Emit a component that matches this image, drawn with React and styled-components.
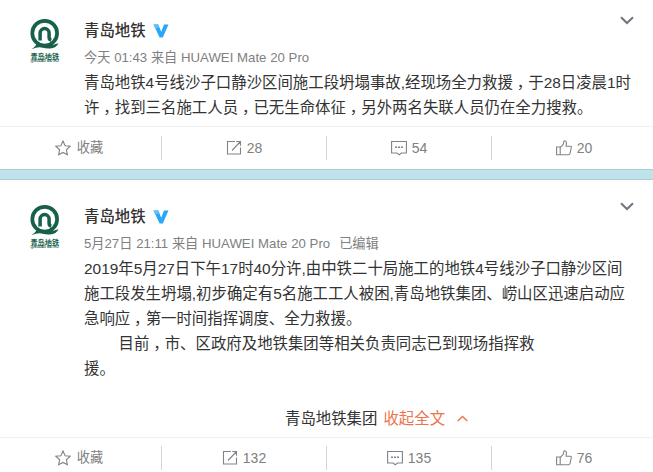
import React from "react";
import styled, { createGlobalStyle } from "styled-components";

const GlobalStyle = createGlobalStyle`
  body {
    margin: 0;
    background: #bee3ea;
    font-family: "Liberation Sans", "Noto Sans CJK SC", sans-serif;
    overflow: hidden;
  }
`;

const Feed = styled.main`
  width: 653px;
  height: 472px;
  overflow: hidden;
  display: flex;
  flex-direction: column;
  gap: 10px;
`;

const Card = styled.article`
  flex: none;
  display: flex;
  flex-direction: column;
  height: ${(p) => p.$height}px;
  box-sizing: border-box;
  background: #fff;
  border-bottom: 1px solid #a9cfd6;
  box-shadow: 0 -1px 0 #a9cfd6;
`;

const Main = styled.div`
  flex: 1;
  display: grid;
  grid-template-columns: 54px 1fr 14px;
  padding: ${(p) => p.$top}px 19px 0 30px;
`;

const Logo = styled.svg`
  display: block;
  width: 30px;
  height: 45px;
`;

const Body = styled.div`
  min-width: 0;
`;

const Header = styled.div`
  display: flex;
  align-items: center;
  gap: 7px;
  height: 24px;
  padding-top: 1px;
`;

const Name = styled.strong`
  font-size: 15.4px;
  line-height: 24px;
  font-weight: 500;
  color: #333;
`;

const Meta = styled.div`
  display: flex;
  gap: 9px;
  height: 27px;
  font-size: 13.2px;
  line-height: 29px;
  word-spacing: 0.1px;
  color: #808080;
  white-space: nowrap;
`;

const Line = styled.p`
  margin: 0;
  height: 25px;
  padding-left: ${(p) => p.$indent || 0}px;
  font-size: 15.42px;
  line-height: 25px;
  color: #333;
  white-space: nowrap;
`;

const Comma = styled.span`
  display: inline-block;
  box-sizing: border-box;
  width: 1em;
  padding-left: 0.25em;
  font-feature-settings: "halt";
`;

const Closing = styled(Line)`
  display: flex;
  align-items: center;
  margin-top: 25px;
  padding-left: 201px;
`;

const Fold = styled.a`
  display: flex;
  align-items: center;
  gap: 12px;
  margin-left: 6px;
  color: #eb7350;
`;

const Caret = styled.svg`
  display: block;
  width: 14px;
  height: 9px;
  margin-top: ${(p) => p.$offset}px;
`;

const Actions = styled.ul`
  display: grid;
  grid-template-columns: repeat(4, 165px);
  flex: none;
  height: 43px;
  box-sizing: border-box;
  margin: 0 0 0 -3px;
  padding: ${(p) => p.$top}px 0 0;
  list-style: none;
  border-top: 1px solid #f0f0f0;
`;

const Action = styled.li`
  display: flex;
  align-items: center;
  justify-content: center;
  gap: ${(p) => (p.$label ? 6 : 5)}px;
  height: 24px;
  border-right: 1px solid #d4d4d4;
  font-size: ${(p) => (p.$label ? 13.2 : 14)}px;
  line-height: 24px;
  color: #808080;

  &:last-child {
    border-right-color: transparent;
  }
`;

const Icon = styled.svg`
  display: block;
  width: 16px;
  height: 16px;
  fill: none;
  stroke: #808389;
  stroke-width: 1.1;
`;

const Verified = styled.svg`
  display: block;
  width: 16px;
  height: 14px;
`;

const LogoName = styled.text`
  font: 700 7.2px "Noto Sans CJK SC", sans-serif;
  fill: #17604a;
`;

const LogoLatin = styled.text`
  font: 700 2.8px "Liberation Sans", sans-serif;
  fill: #17604a;
`;

const MetroLogo = () => (
  <Logo viewBox="0 0 30 45">
    <circle cx="14.7" cy="15.2" r="12.400" fill="none" stroke="#17604a" strokeWidth="3.700" />
    <path d="M10.100 22.500v-7.400a4.500 4.500 0 0 1 9 0v4.200q.1 2.300 2.200 2.800" fill="none" stroke="#17604a" strokeWidth="3.500" />
    <path d="M1.500 31.200Q6 28.800 6.800 24.800q4 2.700 10 2.700 5 0 11.700-2.200-2 4.800-8.500 5.200-4.500.2-8-1-4-1.200-10.500 1.700z" fill="#17604a" />
    <LogoName x="0.4" y="40.700" textLength="28.800">青岛地铁</LogoName>
    <LogoLatin x="0.6" y="44.300" textLength="28.200" lengthAdjust="spacingAndGlyphs">QINGDAO METRO</LogoLatin>
  </Logo>
);

const VerifiedMark = () => (
  <Verified viewBox="0 0 16 14">
    <path d="M.5 .5h4.800l2.900 7.300L11 .5h4.500L9.800 13.500H6.600z" fill="#29a7f8" />
    <path d="M.5 .5h4.800l1 2.500-3.800 2z" fill="#63bdfb" />
  </Verified>
);

const Expand = ({ offset }) => (
  <Caret viewBox="0 0 14 9" $offset={offset}>
    <path d="M1 1.300l6 5.700 6-5.700" fill="none" stroke="#6f7480" strokeWidth="2" />
  </Caret>
);

const FoldCaret = styled.svg`
  display: block;
  width: 11px;
  height: 7px;
`;

const StarIcon = () => (
  <Icon viewBox="0 0 16 16">
    <path d="M8 1l2.100 4.700 5 .6-3.700 3.500 1 5L8 12.400l-4.400 2.400 1-5L.9 6.300l5-.6z" />
  </Icon>
);
const ShareIcon = () => (
  <Icon viewBox="0 0 16 16">
    <path d="M9 1.500H1.500v12.500h13V7.500M6 10.500l8.500-9M10.200 1.500h4.300v4.300" />
  </Icon>
);
const CommentIcon = () => (
  <Icon viewBox="0 0 16 16">
    <path d="M.6 1.500h14.800v11.500h-5L8.300 14.700l-2.300-1.700H.6z" />
    <path d="M4 7.300h2M7 7.300h2M10 7.300h2" strokeWidth="1.600" />
  </Icon>
);
const LikeIcon = () => (
  <Icon viewBox="0 0 16 16">
    <path d="M.6 7h3.600v7.700H.6zM4.200 7.500l3.100-3.200.5-2.700Q8 .8 8.700.8q1.700.2 1.800 1.900l-.4 3.600h4.300q1.100.1.900 1.200L14 13.600q-.4 1.100-1.500 1.100H4.200" />
  </Icon>
);

/* Full-width commas sit in the middle of their cell. */
const Text = ({ children }) =>
  children.split("，").map((part, i) => (
    <React.Fragment key={i}>
      {i > 0 && <Comma>，</Comma>}
      {part}
    </React.Fragment>
  ));

const Post = ({ height, top, actionTop, meta, lines, closing, counts }) => (
  <Card $height={height}>
    <Main $top={top}>
      <MetroLogo />
      <Body>
        <Header>
          <Name>青岛地铁</Name>
          <VerifiedMark />
        </Header>
        <Meta>
          {meta.map((m) => (
            <span key={m}>{m}</span>
          ))}
        </Meta>
        {lines.map((l) => (
          <Line key={l.text} $indent={l.indent}>
            <Text>{l.text}</Text>
          </Line>
        ))}
        {closing && (
          <Closing>
            {closing}
            <Fold>
              收起全文
              <FoldCaret viewBox="0 0 11 7">
                <path d="M.7 6l4.800-4.500L10.300 6" fill="none" stroke="#eb7350" strokeWidth="1.400" />
              </FoldCaret>
            </Fold>
          </Closing>
        )}
      </Body>
      <Expand offset={-2} />
    </Main>
    <Actions $top={actionTop}>
      <Action $label>
        <StarIcon />
        收藏
      </Action>
      <Action>
        <ShareIcon />
        {counts[0]}
      </Action>
      <Action>
        <CommentIcon />
        {counts[1]}
      </Action>
      <Action>
        <LikeIcon />
        {counts[2]}
      </Action>
    </Actions>
  </Card>
);

export default function App() {
  return (
    <>
      <GlobalStyle />
      <Feed>
        <Post
          height={170}
          top={18}
          actionTop={9}
          meta={["今天 01:43 来自 HUAWEI Mate 20 Pro"]}
          lines={[
            { text: "青岛地铁4号线沙子口静沙区间施工段坍塌事故,经现场全力救援，于28日凌晨1时" },
            { text: "许，找到三名施工人员，已无生命体征，另外两名失联人员仍在全力搜救。" },
          ]}
          counts={[28, 54, 20]}
        />
        <Post
          height={301}
          top={24}
          actionTop={8}
          meta={["5月27日 21:11 来自 HUAWEI Mate 20 Pro", "已编辑"]}
          lines={[
            { text: "2019年5月27日下午17时40分许,由中铁二十局施工的地铁4号线沙子口静沙区间" },
            { text: "施工段发生坍塌,初步确定有5名施工工人被困,青岛地铁集团、崂山区迅速启动应" },
            { text: "急响应，第一时间指挥调度、全力救援。" },
            { text: "目前，市、区政府及地铁集团等相关负责同志已到现场指挥救", indent: 34.5 },
            { text: "援。" },
          ]}
          closing="青岛地铁集团"
          counts={[132, 135, 76]}
        />
      </Feed>
    </>
  );
}
